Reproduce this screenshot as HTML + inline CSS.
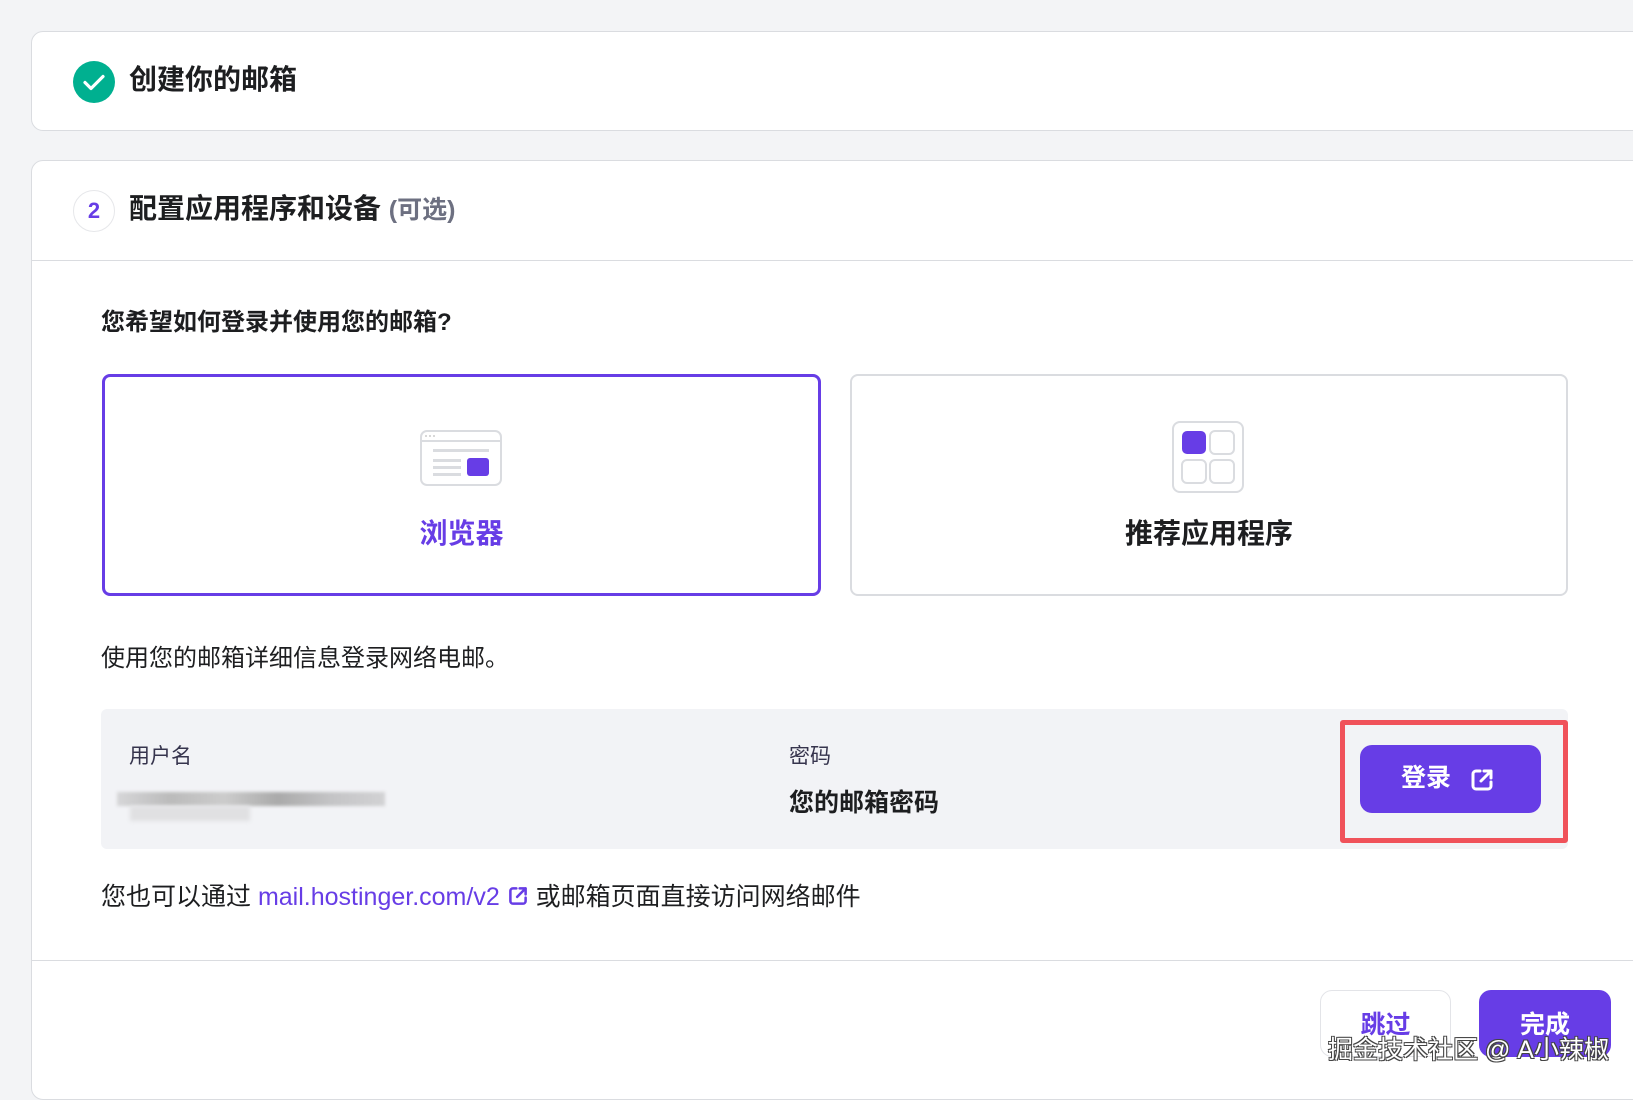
<!DOCTYPE html>
<html><head><meta charset="utf-8"><style>
*{box-sizing:border-box;margin:0;padding:0}
body{width:1633px;height:1089px;overflow:hidden;background:#f3f4f6;font-family:"Liberation Sans","Noto Sans CJK SC",sans-serif;color:#1d1e20;position:relative}
.abs{position:absolute}
.card{position:absolute;background:#fff;border:1px solid #dadce0;border-radius:12px}
.b{font-weight:700}
</style></head><body>
<div class="card" style="left:31px;top:31px;width:1640px;height:100px"></div>
<div class="abs" style="left:73px;top:61px;width:42px;height:42px;border-radius:50%;background:#00b090"></div>
<svg class="abs" style="left:73px;top:61px" width="42" height="42"><path d="M12 21.5l6 6 12-12" fill="none" stroke="#fff" stroke-width="3.2" stroke-linecap="round" stroke-linejoin="round"/></svg>
<div class="abs b" style="left:129px;top:63px;font-size:28px;line-height:34px">创建你的邮箱</div>

<div class="card" style="left:31px;top:160px;width:1640px;height:940px"></div>
<div class="abs" style="top:260px;width:1633px;height:1px;background:#dadce0;left:32px"></div>
<div class="abs" style="left:73px;top:190px;width:42px;height:42px;border-radius:50%;border:1px solid #e6e7ea;color:#673de6;font-size:22px;font-weight:700;text-align:center;line-height:40px">2</div>
<div class="abs b" style="left:129px;top:192px;font-size:28px;line-height:34px">配置应用程序和设备 <span style="color:#6d7081;font-size:25px">(可选)</span></div>

<div class="abs b" style="left:101px;top:308px;font-size:24px;line-height:30px">您希望如何登录并使用您的邮箱?</div>

<div class="abs" style="left:102px;top:374px;width:719px;height:222px;border:3px solid #673de6;border-radius:8px;background:#fff"></div>
<svg class="abs" style="left:420px;top:430px" width="82" height="56" viewBox="0 0 82 56"><rect x="1" y="1" width="80" height="54" rx="6" fill="#fff" stroke="#dadce0" stroke-width="2"/><line x1="1" y1="11" x2="81" y2="11" stroke="#dadce0" stroke-width="2"/><circle cx="6" cy="6" r="1" fill="#ccc"/><circle cx="10" cy="6" r="1" fill="#ccc"/><circle cx="14" cy="6" r="1" fill="#ccc"/><rect x="13" y="19" width="56" height="3" fill="#dadce0"/><rect x="13" y="29" width="28" height="3" fill="#dadce0"/><rect x="13" y="36" width="28" height="3" fill="#dadce0"/><rect x="13" y="43" width="28" height="3" fill="#dadce0"/><rect x="47" y="28" width="22" height="18" rx="3" fill="#673de6"/></svg>
<div class="abs b" style="left:102px;top:517px;width:719px;text-align:center;font-size:28px;line-height:34px;color:#673de6">浏览器</div>

<div class="abs" style="left:850px;top:374px;width:718px;height:222px;border:2px solid #dadce0;border-radius:8px;background:#fff"></div>
<svg class="abs" style="left:1172px;top:421px" width="72" height="72" viewBox="0 0 72 72"><rect x="1" y="1" width="70" height="70" rx="7" fill="#fff" stroke="#dadce0" stroke-width="2"/><rect x="10" y="10" width="24" height="23" rx="5" fill="#673de6"/><rect x="38" y="10" width="24" height="23" rx="5" fill="#fff" stroke="#dadce0" stroke-width="2"/><rect x="10" y="39" width="24" height="23" rx="5" fill="#fff" stroke="#dadce0" stroke-width="2"/><rect x="38" y="39" width="24" height="23" rx="5" fill="#fff" stroke="#dadce0" stroke-width="2"/></svg>
<div class="abs b" style="left:850px;top:517px;width:718px;text-align:center;font-size:28px;line-height:34px">推荐应用程序</div>

<div class="abs" style="left:101px;top:644px;font-size:24px;line-height:30px">使用您的邮箱详细信息登录网络电邮。</div>

<div class="abs" style="left:101px;top:709px;width:1467px;height:140px;background:#f2f3f6;border-radius:6px"></div>
<div class="abs" style="left:129px;top:740px;font-size:21px;color:#36344d">用户名</div>
<div class="abs" style="left:117px;top:792px;width:268px;height:14px;background:linear-gradient(90deg,#d6d6d8,#bbb 20%,#ccc 40%,#aaa 60%,#c4c4c6 80%,#d2d2d4);filter:blur(1.5px)"></div>
<div class="abs" style="left:130px;top:806px;width:120px;height:15px;background:#e0e0e2;filter:blur(2px)"></div>
<div class="abs" style="left:789px;top:740px;font-size:21px;color:#36344d">密码</div>
<div class="abs b" style="left:789px;top:783px;font-size:25px">您的邮箱密码</div>

<div class="abs" style="left:1340px;top:720px;width:228px;height:123px;border:5px solid #f0525a;border-radius:3px"></div>
<div class="abs" style="left:1360px;top:745px;width:181px;height:68px;background:#673de6;border-radius:12px"></div>
<div class="abs b" style="left:1401px;top:763px;font-size:25px;color:#fff;line-height:30px">登录</div>
<svg class="abs" style="left:1469px;top:767px" width="26" height="26" viewBox="0 0 26 26"><path d="M11 4H7a3 3 0 0 0-3 3v12a3 3 0 0 0 3 3h12a3 3 0 0 0 3-3v-4M15 4h7v7M22 4L12 14" fill="none" stroke="#fff" stroke-width="3" stroke-linecap="round" stroke-linejoin="round"/></svg>

<div class="abs" style="left:101px;top:882px;font-size:25px;line-height:30px">您也可以通过 <span style="color:#673de6">mail.hostinger.com/v2</span> <svg width="22" height="22" viewBox="0 0 26 26" style="vertical-align:-2px"><path d="M11 4H7a3 3 0 0 0-3 3v12a3 3 0 0 0 3 3h12a3 3 0 0 0 3-3v-4M15 4h7v7M22 4L12 14" fill="none" stroke="#673de6" stroke-width="3" stroke-linecap="round" stroke-linejoin="round"/></svg> 或邮箱页面直接访问网络邮件</div>

<div class="abs" style="left:32px;top:960px;width:1601px;height:1px;background:#dadce0"></div>
<div class="abs" style="left:1320px;top:990px;width:131px;height:67px;border:1px solid #e3e4e8;border-radius:12px;background:#fff"></div>
<div class="abs b" style="left:1320px;top:1005px;width:131px;text-align:center;font-size:25px;color:#673de6">跳过</div>
<div class="abs" style="left:1479px;top:990px;width:132px;height:67px;border-radius:12px;background:#673de6"></div>
<div class="abs b" style="left:1479px;top:1005px;width:132px;text-align:center;font-size:25px;color:#fff">完成</div>
<div class="abs" style="left:1328px;top:1030px;font-size:25px;color:#fff;text-shadow:1px 1px 0 #444,-1px -1px 0 #444,1px -1px 0 #444,-1px 1px 0 #444;white-space:nowrap">掘金技术社区 @ A小辣椒</div>
</body></html>
